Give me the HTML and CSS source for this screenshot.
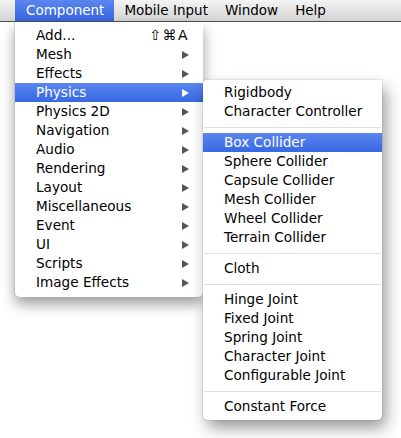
FILE: index.html
```html
<!DOCTYPE html>
<html>
<head>
<meta charset="utf-8">
<link rel="stylesheet" href="styles.css">
</head>
<body>
<div class="menubar">
  <div class="mb-item active">Component</div>
  <div class="mb-item">Mobile Input</div>
  <div class="mb-item">Window</div>
  <div class="mb-item">Help</div>
</div>
<div class="menu main-menu">
  <div class="row"><span>Add...</span><span class="shortcut">⇧⌘A</span></div>
  <div class="row"><span>Mesh</span><span class="arrow"></span></div>
  <div class="row"><span>Effects</span><span class="arrow"></span></div>
  <div class="row sel"><span>Physics</span><span class="arrow"></span></div>
  <div class="row"><span>Physics 2D</span><span class="arrow"></span></div>
  <div class="row"><span>Navigation</span><span class="arrow"></span></div>
  <div class="row"><span>Audio</span><span class="arrow"></span></div>
  <div class="row"><span>Rendering</span><span class="arrow"></span></div>
  <div class="row"><span>Layout</span><span class="arrow"></span></div>
  <div class="row"><span>Miscellaneous</span><span class="arrow"></span></div>
  <div class="row"><span>Event</span><span class="arrow"></span></div>
  <div class="row"><span>UI</span><span class="arrow"></span></div>
  <div class="row"><span>Scripts</span><span class="arrow"></span></div>
  <div class="row"><span>Image Effects</span><span class="arrow"></span></div>
</div>
<div class="menu sub-menu">
  <div class="row"><span>Rigidbody</span></div>
  <div class="row"><span>Character Controller</span></div>
  <div class="sep"></div>
  <div class="row sel"><span>Box Collider</span></div>
  <div class="row"><span>Sphere Collider</span></div>
  <div class="row"><span>Capsule Collider</span></div>
  <div class="row"><span>Mesh Collider</span></div>
  <div class="row"><span>Wheel Collider</span></div>
  <div class="row"><span>Terrain Collider</span></div>
  <div class="sep"></div>
  <div class="row"><span>Cloth</span></div>
  <div class="sep"></div>
  <div class="row"><span>Hinge Joint</span></div>
  <div class="row"><span>Fixed Joint</span></div>
  <div class="row"><span>Spring Joint</span></div>
  <div class="row"><span>Character Joint</span></div>
  <div class="row"><span>Configurable Joint</span></div>
  <div class="sep"></div>
  <div class="row"><span>Constant Force</span></div>
</div>
</body>
</html>
```
FILE: styles.css
```css
html, body {
  margin: 0;
  padding: 0;
  background: #ffffff;
  font-family: "DejaVu Sans", "Liberation Sans", sans-serif;
  font-size: 13.6px;
  color: #000;
  width: 401px;
  height: 438px;
  overflow: hidden;
}

.menubar {
  height: 21px;
  border-bottom: 1px solid #4e4e4e;
  background: linear-gradient(#f4f4f4, #d3d3d3);
  display: flex;
  align-items: stretch;
  padding-left: 15px;
}

.mb-item {
  padding: 0 7px 0 10px;
  line-height: 21px;
  font-size: 13.5px;
}

.mb-item.active {
  padding: 0 10px 0 11px;
  background: linear-gradient(#5a86ee, #3565e3);
  color: #fff;
}

.menu {
  position: absolute;
  background: #fff;
  border-radius: 0 0 5px 5px;
  box-sizing: border-box;
}

.main-menu {
  left: 15px;
  top: 22px;
  width: 188px;
  padding: 4px 0 5px;
  box-shadow: 0 7px 14px rgba(0, 0, 0, 0.4), -1px 0 0 rgba(0, 0, 0, 0.08);
  z-index: 1;
}

.sub-menu {
  left: 203px;
  top: 80px;
  width: 179px;
  padding: 3px 0 4px;
  border-radius: 4px 0 5px 5px;
  box-shadow: 4px 8px 16px rgba(0, 0, 0, 0.4), 0 0 0 1px rgba(0, 0, 0, 0.06);
  z-index: 2;
}

.row {
  height: 19px;
  line-height: 19px;
  padding: 0 13px 0 21px;
  display: flex;
  justify-content: space-between;
  align-items: center;
  white-space: nowrap;
}

.row.sel {
  background: linear-gradient(#5b86ee, #3768e4);
  color: #fff;
}

.shortcut {
  font-size: 14px;
  letter-spacing: 1.5px;
  margin-right: 1px;
}

.arrow {
  width: 0;
  height: 0;
  border-top: 4px solid transparent;
  border-bottom: 4px solid transparent;
  border-left: 7px solid #555;
  margin-right: 1px;
}

.row.sel .arrow {
  border-left-color: #fff;
}

.sep {
  height: 12px;
  display: flex;
  align-items: center;
}

.sep::before {
  content: "";
  flex: 1;
  height: 1px;
  background: #dedede;
  margin: 0 1px;
}
```
